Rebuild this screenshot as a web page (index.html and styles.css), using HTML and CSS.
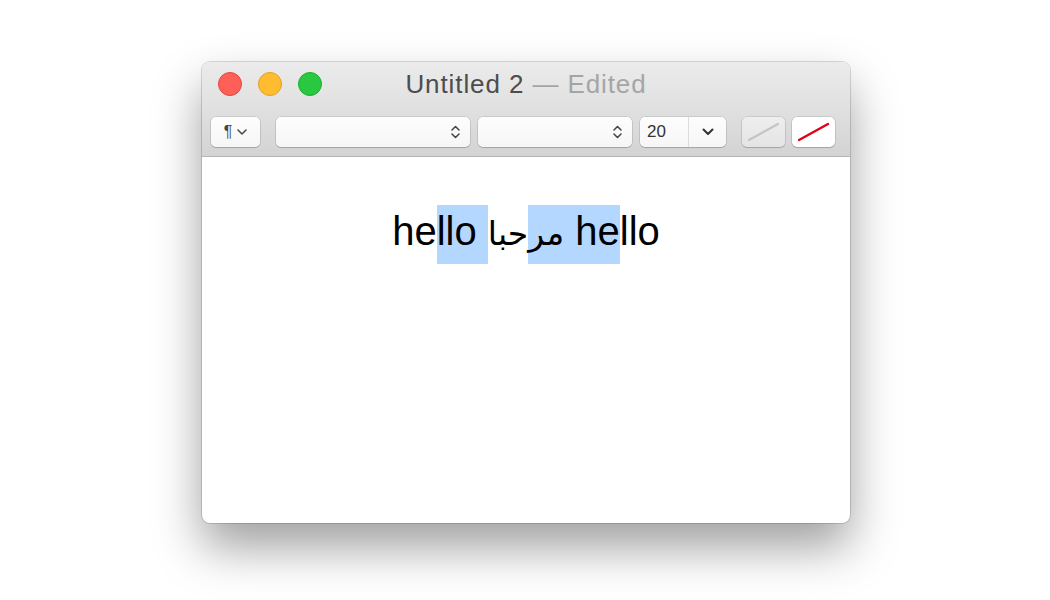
FILE: index.html
```html
<!DOCTYPE html>
<html lang="en">
<head>
    <meta charset="UTF-8">
    <title>Untitled 2 — Edited</title>
    <link rel="stylesheet" href="styles.css">
</head>
<body>
    <div class="window">
        <div class="titlebar">
            <div class="lights">
                <span class="light close"></span>
                <span class="light minimize"></span>
                <span class="light zoom"></span>
            </div>
            <div class="title">Untitled 2 <span class="edited">— Edited</span></div>
            <div></div>
        </div>

        <div class="toolbar">
            <div class="btn para">
                <span class="pilcrow">¶</span>
                <svg width="10" height="6" viewBox="0 0 10 6"><path d="M1 1l4 4 4-4" fill="none" stroke="#444" stroke-width="1.5" stroke-linecap="round" stroke-linejoin="round"/></svg>
            </div>
            <div class="btn popup font-family">
                <svg width="9" height="14" viewBox="0 0 9 14"><path d="M1 5l3.5-3.5L8 5M1 9l3.5 3.5L8 9" fill="none" stroke="#444" stroke-width="1.5" stroke-linecap="round" stroke-linejoin="round"/></svg>
            </div>
            <div class="btn popup font-style">
                <svg width="9" height="14" viewBox="0 0 9 14"><path d="M1 5l3.5-3.5L8 5M1 9l3.5 3.5L8 9" fill="none" stroke="#444" stroke-width="1.5" stroke-linecap="round" stroke-linejoin="round"/></svg>
            </div>
            <div class="btn combo">
                <span class="size">20</span>
                <span class="combo-arrow">
                    <svg width="12" height="8" viewBox="0 0 12 8"><path d="M1.5 1.5l4.5 4.5 4.5-4.5" fill="none" stroke="#333" stroke-width="2" stroke-linecap="round" stroke-linejoin="round"/></svg>
                </span>
            </div>
            <div class="well text-color">
                <svg width="33" height="20" viewBox="0 0 33 20"><path d="M2 18L31 2" stroke="#c4c4c4" stroke-width="2.2" stroke-linecap="round"/></svg>
            </div>
            <div class="well bg-color">
                <svg width="33" height="20" viewBox="0 0 33 20"><path d="M2 18L31 2" stroke="#e3001b" stroke-width="2.4" stroke-linecap="round"/></svg>
            </div>
        </div>

        <div class="content">
            <p class="line">he<span class="sel">llo </span><span class="sel"><span class="ar">مر</span></span><span class="ar">حبا</span><span class="sel"> he</span>llo</p>
        </div>
    </div>
</body>
</html>
```

FILE: styles.css
```css
body {
    margin: 0;
    background: #fff;
    font-family: "Liberation Sans", Arial, sans-serif;
    width: 1050px;
    height: 600px;
    overflow: hidden;
}

.window {
    width: 648px;
    height: 461px;
    margin: 62px 0 0 202px;
    box-sizing: border-box;
    border-radius: 8px;
    overflow: hidden;
    background: #fff;
    box-shadow: 0 0 0 1px rgba(0, 0, 0, 0.14), 0 24px 48px rgba(0, 0, 0, 0.38);
    display: flex;
    flex-direction: column;
}

.titlebar {
    height: 44px;
    display: grid;
    grid-template-columns: 1fr auto 1fr;
    align-items: center;
    background: linear-gradient(#ebebeb, #e1e1e1);
}

.lights {
    display: flex;
    gap: 16px;
    padding-left: 16px;
}

.light {
    width: 22px;
    height: 22px;
    border-radius: 50%;
    border: 1px solid;
}

.close {
    background: #fe5f57;
    border-color: #e2463f;
}

.minimize {
    background: #febc2e;
    border-color: #e0a123;
}

.zoom {
    background: #28c840;
    border-color: #1dad2b;
}

.title {
    font-size: 26px;
    letter-spacing: 0.9px;
    color: #4d4d4d;
    padding-top: 1px;
}

.edited {
    color: #a5a5a5;
}

.toolbar {
    display: flex;
    align-items: center;
    gap: 8px;
    padding: 11px 0 9px 9px;
    background: linear-gradient(#e1e1e1, #d3d3d3);
    border-bottom: 1px solid #b4b4b4;
}

.btn, .well {
    height: 30px;
    box-sizing: border-box;
    border-radius: 5px;
    background: linear-gradient(#fdfdfd, #f6f6f6);
    box-shadow: 0 0 0 0.5px rgba(0, 0, 0, 0.18), 0 1px 1px rgba(0, 0, 0, 0.16);
    display: flex;
    align-items: center;
}

.para {
    width: 49px;
    justify-content: center;
    gap: 5px;
    margin-right: 8px;
}

.pilcrow {
    font-size: 16px;
    color: #444;
}

.popup {
    justify-content: flex-end;
    padding-right: 10px;
}

.font-family {
    width: 194px;
}

.font-style {
    width: 154px;
}

.combo {
    width: 86px;
}

.size {
    width: 49px;
    box-sizing: border-box;
    padding-left: 7px;
    font-size: 17px;
    color: #333;
    border-right: 1px solid #dcdcdc;
    line-height: 30px;
}

.combo-arrow {
    flex: 1;
    display: flex;
    justify-content: center;
}

.well {
    width: 43px;
    justify-content: center;
}

.text-color {
    margin-left: 8px;
    background: linear-gradient(#eeeeee, #e4e4e4);
}

.bg-color {
    margin-left: -1px;
    background: #fff;
}

.content {
    flex: 1;
    padding-top: 45px;
}

.line {
    margin: 0;
    text-align: center;
    font-family: "Liberation Sans", "DejaVu Sans", sans-serif;
    font-size: 40px;
    line-height: 59px;
    color: #000;
}

.ar {
    font-size: 33px;
}

.sel {
    background: #b4d7ff;
    padding: 4px 0 11px;
}
```
